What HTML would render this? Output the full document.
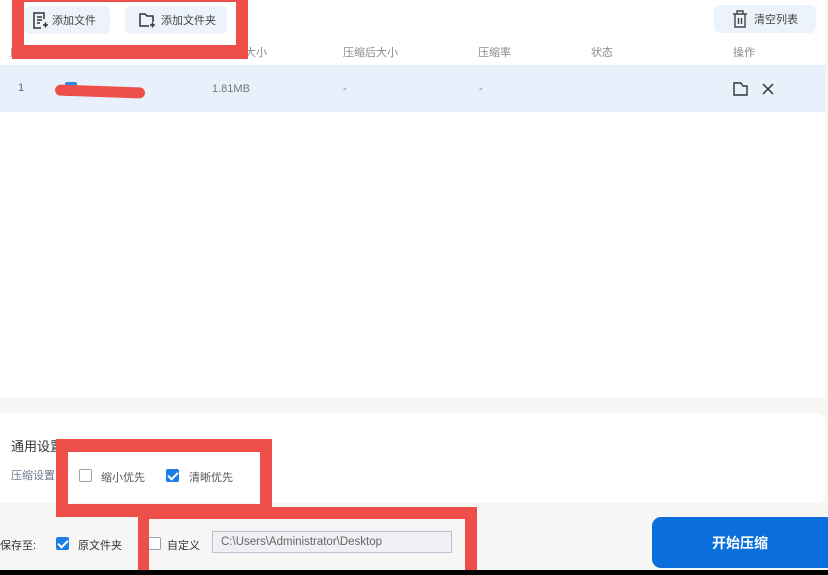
<!DOCTYPE html>
<html><head><meta charset="utf-8"><style>
*{margin:0;padding:0;box-sizing:border-box}
html,body{width:828px;height:575px;overflow:hidden}
body{position:relative;background:#f6f6f5;font-family:"Liberation Sans","Noto Sans CJK SC",sans-serif;font-size:11px;color:#555}
.a{position:absolute}
.btn{position:absolute;background:#edf3fa;border-radius:6px;height:28px;display:flex;align-items:center;padding-left:6px;color:#444;font-size:11px}
.hd{position:absolute;top:44px;color:#8a8a8a;font-size:11px}
.cb{position:absolute;width:13px;height:13px;border:1px solid #9aa3ad;border-radius:2px;background:#fff}
.cb.on{background:#1a7ee6;border-color:#1a7ee6}
.cb.on:after{content:"";position:absolute;left:3px;top:0px;width:4px;height:8px;border:solid #fff;border-width:0 2px 2px 0;transform:rotate(45deg)}
.red{position:absolute;border:12px solid #ee4f4a}
</style></head><body>
<div class="a" style="left:0;top:0;width:825px;height:398px;background:#fff"></div>
<div class="a" style="left:0;top:65px;width:825px;height:47px;background:#e8f1fb"></div>
<div class="btn" style="left:24px;top:6px;width:86px"><svg width="20" height="20" viewBox="0 0 20 20" fill="none" stroke="#333" stroke-width="1.5"><path d="M14 9V3H4v15h7M7 7h5M7 10h5M7 13h3M13 15h5M15.5 12.5v5"/></svg><span style="margin-left:2px">添加文件</span></div>
<div class="btn" style="left:125px;top:6px;width:102px;padding-left:12px"><svg width="20" height="20" viewBox="0 0 20 20" fill="none" stroke="#333" stroke-width="1.5"><path d="M12 16H3V4h5l2 2h6v6M13 15h5M15.5 12.5v5"/></svg><span style="margin-left:4px">添加文件夹</span></div>
<div class="btn" style="left:714px;top:5px;width:102px;padding-left:18px"><svg width="16" height="18" viewBox="0 0 16 18" fill="none" stroke="#444" stroke-width="1.4"><path d="M1 4h14M5 4V1h6v3M3 4v13h10V4M6.5 8v6M9.5 8v6"/></svg><span style="margin-left:6px">清空列表</span></div>
<div class="hd" style="left:10px">序号</div>
<div class="hd" style="left:63px">文件名称</div>
<div class="hd" style="left:212px">原文件大小</div>
<div class="hd" style="left:343px">压缩后大小</div>
<div class="hd" style="left:478px">压缩率</div>
<div class="hd" style="left:591px">状态</div>
<div class="hd" style="left:733px">操作</div>
<div class="a" style="left:18px;top:82px;color:#666">1</div>
<div class="a" style="left:65px;top:82px;width:12px;height:14px;background:#2d8ae0;border-radius:2px"></div>
<div class="a" style="left:55px;top:86px;width:90px;height:11px;background:#ee4f4a;border-radius:6px;transform:rotate(2deg)"></div>
<div class="a" style="left:212px;top:83px;color:#777">1.81MB</div>
<div class="a" style="left:343px;top:83px;color:#777">-</div>
<div class="a" style="left:479px;top:83px;color:#777">-</div>
<svg class="a" style="left:733px;top:82px" width="16" height="14" viewBox="0 0 16 14" fill="none" stroke="#333" stroke-width="1.4"><path d="M1 1h7l2 3h4v9H1z"/></svg>
<svg class="a" style="left:762px;top:83px" width="12" height="12" viewBox="0 0 12 12" stroke="#333" stroke-width="1.5"><path d="M1 1l10 10M11 1L1 11"/></svg>
<div class="a" style="left:0;top:413px;width:825px;height:90px;background:#fff;border-radius:0 8px 8px 0"></div>
<div class="a" style="left:11px;top:436px;font-size:13px;color:#333">通用设置</div>
<div class="a" style="left:11px;top:467px;color:#6a7a90">压缩设置:</div>
<div class="cb" style="left:79px;top:469px"></div>
<div class="a" style="left:101px;top:469px;color:#555">缩小优先</div>
<div class="cb on" style="left:166px;top:469px"></div>
<div class="a" style="left:189px;top:469px;color:#555">清晰优先</div>
<div class="a" style="left:0;top:537px;color:#333">保存至:</div>
<div class="cb on" style="left:56px;top:537px"></div>
<div class="a" style="left:78px;top:537px;color:#333">原文件夹</div>
<div class="cb" style="left:148px;top:537px"></div>
<div class="a" style="left:167px;top:537px;color:#333">自定义</div>
<div class="a" style="left:212px;top:531px;width:240px;height:22px;background:#eef0f3;border:1px solid #b8c2d0;color:#666;font-size:11.5px;padding:4px 0 0 8px">C:\Users\Administrator\Desktop</div>
<div class="a" style="left:652px;top:517px;width:176px;height:51px;background:#0a6fdc;border-radius:9px 0 0 9px;color:#fff;font-size:14px;display:flex;align-items:center;justify-content:center;font-weight:bold">开始压缩</div>
<div class="red" style="left:12px;top:-10px;width:236px;height:69px;border-bottom-width:14px"></div>
<div class="red" style="left:56px;top:439px;width:216px;height:78px;border-width:13px 12px"></div>
<div class="red" style="left:138px;top:507px;width:339px;height:75px;border-width:12px 12px 12px 11px"></div>
<div class="a" style="left:0;top:570px;width:828px;height:5px;background:#000"></div>
</body></html>
